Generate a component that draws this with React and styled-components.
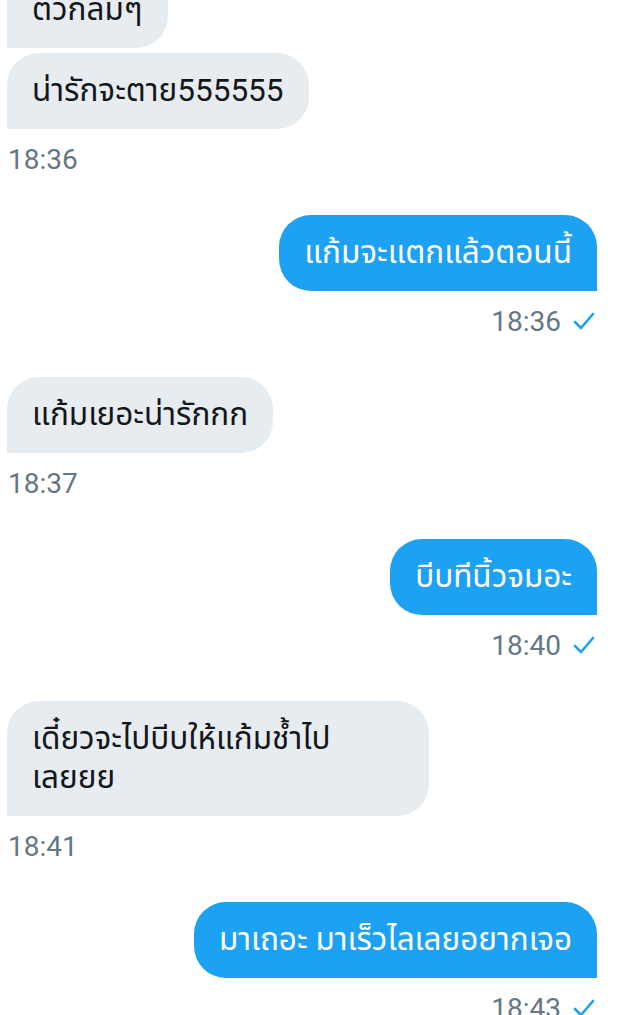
import React from "react";
import styled, { createGlobalStyle } from "styled-components";

const Global = createGlobalStyle`
  html, body { margin: 0; padding: 0; background: #ffffff; }
  body { font-family: Roboto, "Noto Sans Thai", "Noto Sans", "DejaVu Sans", sans-serif; overflow: hidden; }
`;

const Chat = styled.div`
  display: flex;
  flex-direction: column;
  padding: 0 24px 0 7px;
  margin-top: -28px;
  width: 621px;
  box-sizing: border-box;
`;

const Group = styled.div`
  display: flex;
  flex-direction: column;
  align-items: ${(p) => (p.$sent ? "flex-end" : "flex-start")};
  gap: 5px;
  margin-bottom: 39px;
`;

const Bubble = styled.div`
  box-sizing: border-box;
  max-width: 422px;
  padding: 18px 25px 19px;
  font-size: 31.5px;
  line-height: 39px;
  color: ${(p) => (p.$sent ? "#ffffff" : "#14171a")};
  background: ${(p) => (p.$sent ? "#1da1f2" : "#e6ecf0")};
  border-radius: ${(p) => (p.$sent ? "32px 32px 0 32px" : p.$middle ? "0 32px 32px 0" : "32px 32px 32px 0")};
`;

const Word = styled.span`
  white-space: nowrap;
`;

const Meta = styled.div`
  display: flex;
  align-items: center;
  gap: 12px;
  margin-top: 8px;
  height: 34px;
  font-size: 28px;
  color: #657786;
  padding-left: 1px;
  padding-right: ${(p) => (p.$sent ? "2px" : "0")};
`;

const Check = () => (
  <svg width="22" height="18" viewBox="0 0 22 18" fill="none">
    <path d="M2 10 L8 16 L20 2" stroke="#1da1f2" strokeWidth="2.6" strokeLinecap="round" strokeLinejoin="round" />
  </svg>
);

const groups = [
  { sent: false, msgs: [["ตัวกลมๆ"], ["น่ารักจะตาย555555"]], time: "18:36" },
  { sent: true, msgs: [["แก้มจะแตกแล้วตอนนี้"]], time: "18:36" },
  { sent: false, msgs: [["แก้มเยอะน่ารักกก"]], time: "18:37" },
  { sent: true, msgs: [["บีบทีนิ้วจมอะ"]], time: "18:40" },
  { sent: false, msgs: [["เดี๋ยวจะไปบีบให้แก้มช้ำไป", "เลยยย"]], time: "18:41" },
  { sent: true, msgs: [["มาเถอะ มาเร็วไลเลยอยากเจอ"]], time: "18:43" },
];

export default function App() {
  return (
    <>
      <Global />
      <Chat>
        {groups.map((g, i) => (
          <Group key={i} $sent={g.sent}>
            {g.msgs.map((parts, j) => (
              <Bubble key={j} $sent={g.sent} $middle={j === 0 && g.msgs.length > 1}>
                {parts.map((w, k) => (
                  <React.Fragment key={k}>
                    {k > 0 && <wbr />}
                    <Word>{w}</Word>
                  </React.Fragment>
                ))}
              </Bubble>
            ))}
            <Meta $sent={g.sent}>
              <span>{g.time}</span>
              {g.sent && <Check />}
            </Meta>
          </Group>
        ))}
      </Chat>
    </>
  );
}
